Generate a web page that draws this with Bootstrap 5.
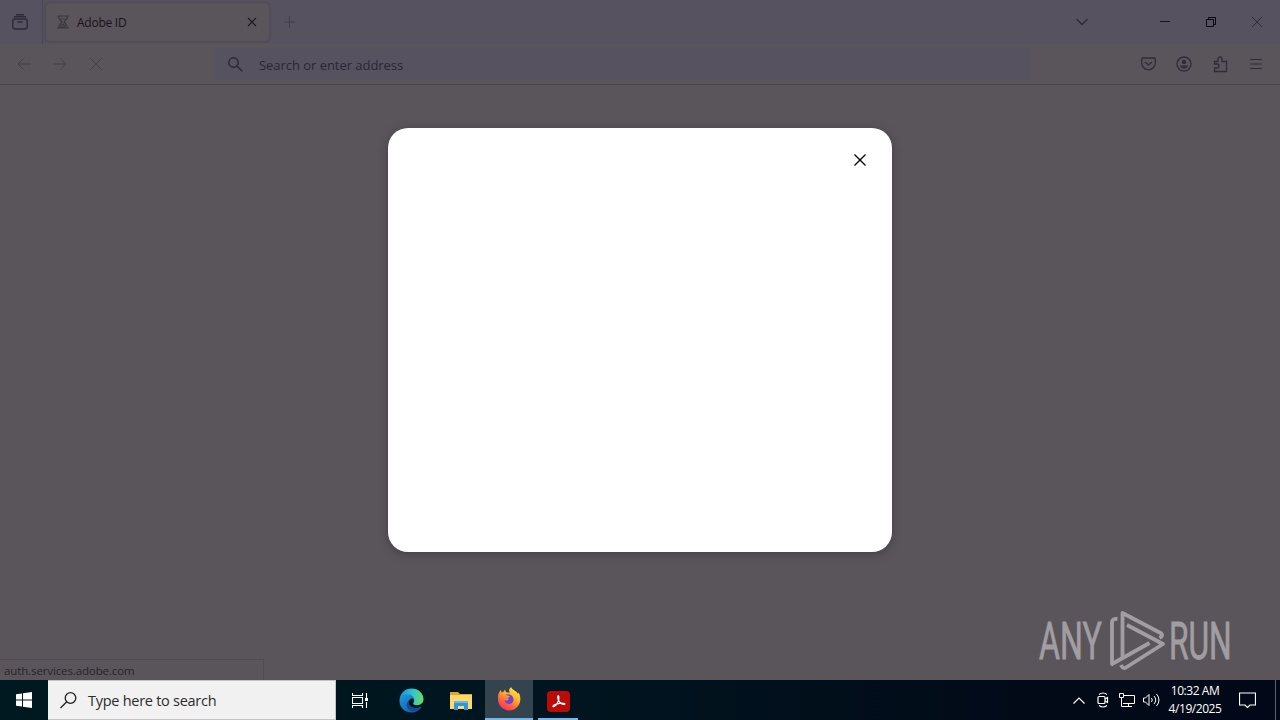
<!DOCTYPE html>
<html lang="en">
<head>
<meta charset="utf-8">
<title>Adobe ID</title>
<link rel="stylesheet" href="https://cdn.jsdelivr.net/npm/bootstrap@5.3.0/dist/css/bootstrap.min.css">
<style>
body{width:1280px;height:720px;overflow:hidden;background:#5a555a;font-family:"Open Sans","Noto Sans",sans-serif;color:#1c1826}
svg{display:block;flex:none}
svg:not([fill]){fill:none}
svg:not([stroke]){stroke:currentColor}
.titlebar{height:44px;background:#57525f}
.view-cell{width:43px;height:44px;border-right:1px solid #4a4655;color:#2d2a3d}
.tab{width:223px;height:38px;margin-left:3px;border-radius:4px;background:#5a555a;box-shadow:0 0 3px #413d45;padding:0 11px}
.tab-title{font-size:12px;letter-spacing:-.25px;color:#17121d;padding-top:1px}
.win{width:46px}
.tools{height:41px;border-bottom:1px solid #48444a;padding:0 6px}
.tool{width:36px;color:#302c3a}
.dim{color:#444049}
.address{width:817px;height:32px;margin-left:100px;background:#575260;border-radius:3px;color:#2a2636;font-size:13px;letter-spacing:-.04px}
.address span{margin-left:16px;padding-top:3px}
.page-area{height:595px}
.status{width:264px;height:21px;left:0;bottom:0;border:1px solid #514c53;border-left:0;border-bottom:0;font-size:11.5px;letter-spacing:-.12px;line-height:21px;padding-left:4px;color:#27232a}
.dialog-box{width:504px;height:424px;left:388px;top:128px;border-radius:20px;box-shadow:0 2px 10px rgba(30,32,42,.4);color:#000}
.dialog-x{right:25px;top:25px}
.watermark{left:1032px;top:604px}
.watermark text{font-family:Roboto,sans-serif;font-size:51px;font-weight:400;fill:#a19ea2;stroke:#a19ea2;stroke-width:.8}
.taskbar{height:40px;background:linear-gradient(90deg,#001820,#00151f 45%,#020a18 80%,#020817);color:#fff}
.start{width:48px}
.search-box{width:288px;height:40px;background:#f1f1f1;border:1px solid #c4c4c4;border-width:1px 1px 1px 0;color:#2c2c2c;font-size:14.5px;padding-left:12px;gap:11px}
.search-box span{letter-spacing:-.27px;padding-top:2px}
.app{width:48px;height:40px}
.app-active{background:#33444e;border-bottom:2px solid #78b7ed}
.app-open{width:40px;margin-left:5px;border-bottom:2px solid #78b7ed}
.tray{width:24px}
.clock{width:64px;font-size:12px;line-height:18px;letter-spacing:-.45px;padding-bottom:1px}
.desktop-edge{width:1px;height:40px;margin-left:19px;margin-right:4px;background:#586271}
</style>
</head>
<body class="position-relative">
<header class="titlebar d-flex align-items-center">
  <div class="view-cell d-flex align-items-center ps-2 ms-0">
    <svg class="ms-1" width="16" height="16" stroke-width="1.4"><rect x=".8" y="5" width="14.4" height="10" rx="2"/><path d="M2 2.800h12M4 .7h8M5.500 8h5"/></svg>
  </div>
  <div class="tab d-flex align-items-center">
    <svg width="12" height="14" stroke="#3b373f" stroke-width="1.2"><path d="M0 1h12M0 13h12M2 1v2.500L5 7l-3 3.500V13M10 1v2.500L7 7l3 3.500V13M4 4h4M4 11l2-2 2 2v1H4z"/></svg>
    <span class="tab-title ms-2 flex-grow-1">Adobe ID</span>
    <svg width="12" height="12" stroke-width="1.1"><path d="m2 2 8 8m0-8-8 8"/></svg>
  </div>
  <svg class="dim me-auto" style="margin-left:15px" width="11" height="12"><path d="M5.500 0v12M0 6h11"/></svg>
  <svg style="margin-right:54px" width="12" height="8" stroke="#2d2938" stroke-width="1.3"><path d="m.5 1 5.500 5.500L11.500 1"/></svg>
  <div class="win d-flex justify-content-center"><svg width="10" height="10" stroke="#171421"><path d="M0 4.500h10"/></svg></div>
  <div class="win d-flex justify-content-center"><svg width="10" height="10" stroke="#070612"><path d="M.5 2.500h7v7h-7zM2.500 2.500v-2h7v7h-2"/></svg></div>
  <div class="win d-flex justify-content-center"><svg width="10" height="10" stroke="#302c37"><path d="m0 0 10 10M10 0 0 10"/></svg></div>
</header>
<nav class="tools d-flex align-items-center">
  <div class="tool dim d-flex justify-content-center"><svg width="14" height="12"><path d="M14 6H1m5.500-5.500L1 6l5.500 5.500"/></svg></div>
  <div class="tool dim d-flex justify-content-center"><svg width="14" height="12"><path d="M0 6h13M7.500.5 13 6l-5.500 5.500"/></svg></div>
  <div class="tool dim d-flex justify-content-center"><svg width="12" height="12"><path d="m0 0 12 12M12 0 0 12"/></svg></div>
  <div class="address d-flex align-items-center">
    <svg style="margin-left:14px" width="15" height="15" stroke-width="1.4"><circle cx="5.500" cy="5.500" r="4.700"/><path d="m9 9 5.300 5.300"/></svg>
    <span>Search or enter address</span>
  </div>
  <div class="d-flex ms-auto">
    <div class="tool d-flex justify-content-center align-items-center"><svg width="15" height="14" stroke-width="1.3"><path d="M2 1h11q1.300 0 1.300 1.300V6a6.800 6.800 0 0 1-13.600 0V2.300Q.7 1 2 1zM4 5l3.500 3L11 5"/></svg></div>
    <div class="tool d-flex justify-content-center align-items-center"><svg width="16" height="16" stroke-width="1.3"><circle cx="8" cy="8" r="7"/><circle cx="8" cy="6" r="2.200" fill="currentColor" stroke="none"/><path d="M4 9.500h8q-.5 3-4 3t-4-3z" fill="currentColor" stroke="none"/></svg></div>
    <div class="tool d-flex justify-content-center align-items-center"><svg width="15" height="17" stroke-width="1.300"><path d="M1.500 5.500H5V3a2 2 0 0 1 4 0v2.500h4.500v10h-12V12H4a2 2 0 0 0 0-4H1.500z"/></svg></div>
    <div class="tool d-flex justify-content-center align-items-center"><svg width="12" height="10"><path d="M0 .5h12M0 5h12M0 9.500h12" stroke-width="1.100"/></svg></div>
  </div>
</nav>
<main class="page-area position-relative"><div class="status position-absolute">auth.services.adobe.com</div></main>
<footer class="taskbar d-flex align-items-center">
  <div class="start d-flex justify-content-center"><svg width="16" height="16" fill="#fff" stroke="none"><path d="M0 2.300 6 1.400V7.500H0zM7 1.200 16 0v7.500H7zM0 8.500h6v6.100l-6-.9zM7 8.500h9V16l-9-1.200z"/></svg></div>
  <div class="search-box d-flex align-items-center">
    <svg width="17" height="17" stroke="#222" stroke-width="1.300"><circle cx="10.500" cy="6" r="5.300"/><path d="M6.800 9.800.500 16"/></svg>
    <span>Type here to search</span>
  </div>
  <div class="app d-flex align-items-center justify-content-center"><svg width="17" height="15" stroke-width="1.100"><path d="M.5 0v2.500h10V0M.5 15v-2.500h10V15M.5 4.500h10v6H.5zM14.500 0v5m0 4v6"/><path d="M13 5h3v3h-3z" fill="#fff" stroke="none"/></svg></div>
  <div class="app d-flex align-items-center justify-content-center" style="margin-left:3px"><svg width="25" height="25" viewBox="0 0 25 25" stroke="none">
    <defs><linearGradient id="sea" x1="0" x2="1" y1=".2" y2=".3"><stop stop-color="#168fd5"/><stop offset=".55" stop-color="#32c3d2"/><stop offset="1" stop-color="#68dc63"/></linearGradient><linearGradient id="deep" y2="1" x2=".8"><stop stop-color="#209bdc"/><stop offset="1" stop-color="#1158a5"/></linearGradient></defs>
    <path d="M.5 12C1 5 6 .5 12.500.5c7 0 12 5 12 10.500 0 4-3 6.200-6.500 6.200-3 0-4.500-1-3.500-2.500C17 10 12 6.500 7 8 3.500 9 1.500 11 .5 12z" fill="url(#sea)"/>
    <path d="M.5 12C2 8 5.500 6 9 6.300c4 .2 6.500 3 6.300 5.700-1-1.500-3-2-4.500-.5C7 15 12 21 18 20c2-.3 3.500-1 4.500-1.500-2 4-6 6-10 6C5.500 24.500 0 19 .5 12z" fill="url(#deep)"/>
    <path d="M10.500 12C7 15 12 21 18 20c2-.3 3.500-1 4.500-1.500-3 4.500-8 5.500-11 4-5-2.500-5-8-1-10.500z" fill="#164b91"/></svg></div>
  <div class="app d-flex align-items-center justify-content-center ps-1"><svg width="22" height="19" stroke="none"><path d="M0 1h8l2 2h12v5H0z" fill="#e5a52a"/><path d="M0 4h22v14H0z" fill="#ffd96b"/><path d="M4 10h14v9h-4v-4H8v4H4z" fill="#3296d8"/><path d="M4 10h14v2H4z" fill="#65b7ed"/></svg></div>
  <div class="app app-active d-flex align-items-center justify-content-center" style="margin-left:2px"><svg width="24" height="24" viewBox="0 0 24 24" stroke="none">
    <defs><linearGradient id="flame" x1=".8" x2=".2" y2="1"><stop stop-color="#fff044"/><stop offset=".4" stop-color="#ffaf2a"/><stop offset=".7" stop-color="#ff603b"/><stop offset="1" stop-color="#f72774"/></linearGradient></defs>
    <path d="M1 10c0-3 1-5 3-7 0 1 .3 2 1 2.500C6 5 7.300 4 8 2.500 8.200 4 9 5 10 5.500h3C11.500 4 12 2 14 0c1 3 6 4 7 7l.5-1.500C23 8 23.500 10 23.300 13 22.800 19 18 23.500 12.200 23.500 6 23.500 1 18.500 1 12z" fill="url(#flame)"/>
    <path d="M8 8c3-2 8-.5 8.500 4 .4 3-2 5-4.500 5s-4.500-2-4.500-4c1 .8 3 1 4.500-1-2 .3-4-1-4-4z" fill="#7146cc"/><path d="M8 8c2 0 3.500.5 5 1.500L10.500 11 12 12c-2 .3-4-1-4-4z" fill="#ff982e"/></svg></div>
  <div class="app app-open d-flex align-items-center justify-content-center pt-1"><svg width="23" height="21" stroke="none"><rect width="23" height="21" rx="4" fill="#ba0b08"/><path d="M6 15.500c-.5-2 8-4 11.500-3 1.500.7-1 1.500-3 .2C12 11 10 7 10.800 5c1.200-1.300 1.500 2 .5 5-1 3-3.500 6.300-5.300 5.500z" stroke="#fff" stroke-width="1.200"/></svg></div>
  <div class="d-flex align-items-center ms-auto">
    <div class="tray d-flex justify-content-center"><svg width="12" height="7" stroke-width="1.200"><path d="M.5 6.500 6 1l5.500 5.500"/></svg></div>
    <div class="tray d-flex justify-content-center"><svg width="12" height="16" stroke-width="1.200"><rect x="1" y="4.500" width="7" height="7" rx="1"/><path d="m8 7 2.500-1.500v5L8 9M2 2.500q4-3 8 0M2 13.500q4 3 8 0"/></svg></div>
    <div class="tray d-flex justify-content-center"><svg width="16" height="14"><path d="M5 2.500h10.500v8H4M9.500 10.500v3M6 13.500h7M.5.500h4v4h-4zM2.500 4.500v9H6"/></svg></div>
    <div class="tray d-flex justify-content-center"><svg width="17" height="14"><path d="M.5 5h2L6 1.500v11L2.500 9h-2zM8.500 5q1.500 2 0 4M11 3q3.500 4 0 8M13.500 1q5 6 0 12"/></svg></div>
    <div class="clock text-center">10:32 AM<br>4/19/2025</div>
    <svg style="margin-left:12px" width="17" height="16"><path d="M.5 1h16v12H11l-2.500 2.500L6 13H.5z" stroke-width="1.200"/></svg>
    <div class="desktop-edge"></div>
  </div>
</footer>
<section class="dialog-box bg-white position-absolute"><svg class="dialog-x position-absolute" width="14" height="14" stroke-width="1.300"><path d="m1.500 1.500 11 11m0-11-11 11"/></svg></section>
<svg class="watermark position-absolute" width="208" height="72">
  <text transform="translate(7 55) scale(.64 1)" textLength="98" lengthAdjust="spacingAndGlyphs">ANY</text>
  <text transform="translate(137 55) scale(.64 1)" textLength="98" lengthAdjust="spacingAndGlyphs">RUN</text>
  <g stroke="#a19ea2" stroke-width="3.800" stroke-linejoin="round">
    <path d="M85.500 15q-5-.5-5.500 3v42l37.500-21"/><path d="M90.500 53V9l39 20.500q2 2-2 4.500"/><path d="m95 21 36 19-37 23.500q-3 2-5-2.500"/>
  </g>
</svg>
<script src="https://cdn.jsdelivr.net/npm/bootstrap@5.3.0/dist/js/bootstrap.bundle.min.js"></script>
</body>
</html>
